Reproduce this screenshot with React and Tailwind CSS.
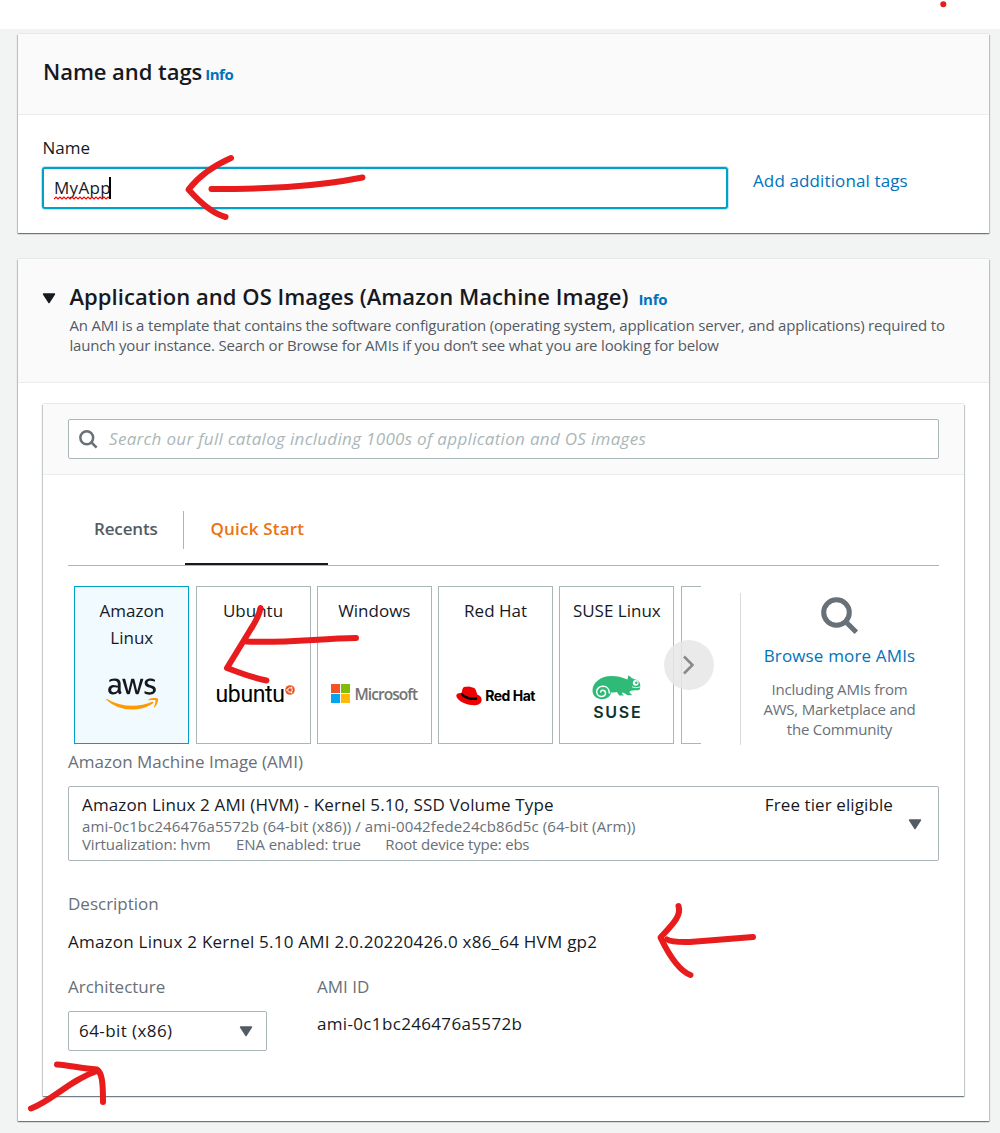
import React from 'react';
import { FaAws } from 'react-icons/fa';

const PANEL =
  'bg-white shadow-[0_1px_1px_0_rgba(0,28,36,0.35),1px_1px_1px_0_rgba(0,28,36,0.18),-1px_1px_1px_0_rgba(0,28,36,0.18),0_-1px_0_0_#e6e9e9]';

function Caret({ className }) {
  return (
    <svg width="14" height="11" viewBox="0 0 14 11" className={className}>
      <path d="M1.5 1h11L7 9.6z" fill="currentColor" stroke="currentColor" strokeWidth="1.4" strokeLinejoin="round" />
    </svg>
  );
}

function SearchIcon({ size, className }) {
  return (
    <svg width={size} height={size} viewBox="0 0 38 38" className={className} fill="none" stroke="currentColor" strokeWidth="5">
      <circle cx="15.5" cy="15.5" r="12.8" />
      <path d="M24.5 24.5 35.3 35.3" />
    </svg>
  );
}

function Tile({ label, selected, children }) {
  return (
    <div
      className={
        'flex h-[158px] w-[115px] shrink-0 flex-col items-center border pt-[10px] text-center text-[17px] leading-[27px] ' +
        (selected ? 'border-[#00a1c9] bg-[#f1faff]' : 'border-[#aab7b8] bg-white')
      }
    >
      <div className="flex h-[54px] w-[78px] justify-center whitespace-nowrap">{label}</div>
      <div className="flex h-[84px] w-full items-center justify-center">{children}</div>
    </div>
  );
}

function AwsLogo() {
  return (
    <>
      <svg width="0" height="0" className="absolute">
        <linearGradient id="awsFill" gradientUnits="userSpaceOnUse" x1="0" y1="0" x2="0" y2="512">
          <stop offset="0.58" stopColor="#16191f" />
          <stop offset="0.58" stopColor="#ff9900" />
        </linearGradient>
      </svg>
      <FaAws className="mt-px h-[42px] w-[52px]" style={{ fill: 'url(#awsFill)' }} />
    </>
  );
}

function UbuntuLogo() {
  return (
    <div className="ml-[4px] mt-[3px] flex items-start font-[Roboto,sans-serif] text-[23px] leading-[28px] text-black">
      <span className="tracking-[-0.35px]">ubuntu</span>
      <svg width="10" height="10" viewBox="0 0 10 10" className="mt-[4px]">
        <circle cx="5" cy="5" r="4.8" fill="#e95420" />
        <circle cx="5" cy="5" r="2.3" fill="none" stroke="#fff" strokeWidth="1" />
        <circle cx="2" cy="5" r="0.8" fill="#fff" />
        <circle cx="6.6" cy="2.3" r="0.8" fill="#fff" />
        <circle cx="6.6" cy="7.7" r="0.8" fill="#fff" />
      </svg>
    </div>
  );
}

function MicrosoftLogo() {
  return (
    <div className="flex items-center gap-[4px]">
      <div className="grid grid-cols-2 gap-px">
        <div className="size-[9px] bg-[#f35325]" />
        <div className="size-[9px] bg-[#81bc06]" />
        <div className="size-[9px] bg-[#05a6f0]" />
        <div className="size-[9px] bg-[#ffba08]" />
      </div>
      <span className="mt-px text-[15.5px] font-semibold leading-5 tracking-[-0.95px] text-[#737373]">Microsoft</span>
    </div>
  );
}

function RedHatLogo() {
  return (
    <div className="mt-[5px] flex items-center gap-[3px]">
      <svg width="26" height="20" viewBox="0 0 26 20">
        <path
          d="M6.4 3.4C7 1.600 7.800.6 9.400.8c1.200.2 2.200-.5 3.600-.4 1.500.2 2.200.9 3.500 1.100 1.700.3 2.700 1.100 3.200 2.600l1.600 4.400c2.700.9 4.700 3.200 4.300 5.900-.5 3.800-5.200 5.200-9.800 4.700C8.700 18.500.8 14.500.3 9.800.1 7.900 2 6.900 4.400 6.900c.4 0 .9 0 1.100.1z"
          fill="#e00"
        />
        <path d="M5.600 6.800c3 3.200 9.200 5.600 15.300 4.400l.3 2.300c-5.700 1.900-13.200-1-16.300-4.500z" fill="#000" />
      </svg>
      <span className="font-[Inter,sans-serif] text-[14px] font-bold leading-5 tracking-[-0.5px] text-black">Red Hat</span>
    </div>
  );
}

function SuseLogo() {
  return (
    <div className="mt-[11px] flex flex-col items-center">
      <svg width="49" height="25" viewBox="0 0 49 25">
        <path
          d="M10 24.200C4.500 24.200.5 20.700.5 15.500.5 8.500 7.500 1 19.500 1c6 0 10 1 16 3.600L36.200.4c2 .4 2.500 2 4.600 3.200 2.200 1.200 4.800 1 6.600 3.600 1 1.500 1.200 5 .4 7-.7 1.300-4 1-7.300 1.200-2.200.2-3 .8-3 1.800 0 1.100 1.800 1.500 2.600 3.100h-4.600c-1.300-1.200-2.800-2.200-5-2.900-1 .5-.2 1.500 1.400 3h-4.700l-2.300-3.300c-2 .5-4.300.3-6 .1 0 4-4 7-8.900 7z"
          fill="#30ba78"
        />
        <path
          d="M17.300 18c0-4-2.600-6.700-6.300-6.700-3.800 0-6.300 2.500-6.300 5.400 0 2.800 2.300 4.700 4.800 4.700 2.300 0 4-1.500 4-3.400 0-1.700-1.200-2.800-2.800-2.800-1.200 0-2 .8-2 1.800"
          fill="none"
          stroke="#fff"
          strokeWidth="1.500"
          strokeLinecap="round"
        />
        <circle cx="43.700" cy="7.800" r="2.900" fill="#fff" />
        <circle cx="44.300" cy="7.700" r="1.200" fill="#30ba78" />
        <path d="M40 11.700c2.500 1.200 5 1.200 8 .2" stroke="#fff" strokeWidth="0.900" fill="none" />
      </svg>
      <span className="mt-[2px] pl-[2px] font-[Inter,sans-serif] text-[16px] font-semibold leading-[20px] tracking-[1.700px] text-[#0c322c]">
        SUSE
      </span>
    </div>
  );
}

/* Hand-drawn red marks over the page. */
function Annotations() {
  return (
    <svg
      width="1000"
      height="1133"
      viewBox="0 0 1000 1133"
      className="pointer-events-none absolute left-0 top-0"
      fill="none"
      stroke="#e81c1c"
      strokeWidth="6"
      strokeLinecap="round"
      strokeLinejoin="round"
    >
      <circle cx="943.300" cy="4.300" r="3" fill="#e81c1c" stroke="none" />
      <path d="M231 158C215 165 199 176 188.500 189.500C197 199 212 213.500 225.500 217" />
      <path d="M211.500 189C262 189 312 187.500 362.500 177.500" />
      <path d="M260.500 608C259 617 254 624 249 632L227 668C240 673 253 678 266.500 680.500" />
      <path d="M246.500 641.500C283 643.500 320 638.500 356 638" />
      <path d="M678.500 906C682 916 671 926 660.500 937.500C667 951 677 970 690.500 975" />
      <path d="M667 939.500C672 942.500 680 942 690 942L753 937" />
      <path d="M57 1064.500C70 1065.500 80 1068 97 1069.500C102 1073 103 1082 103 1102" />
      <path d="M31 1108.500C52 1101 70 1080 97 1071" />
    </svg>
  );
}

export default function App() {
  return (
    <div className="relative h-[1133px] w-[1000px] overflow-hidden bg-[#f2f3f3] font-['Open_Sans','Noto_Sans',sans-serif] text-[17px] leading-6 text-[#16191f]">
      <div className="h-[29px] bg-white" />

      <section className={PANEL + ' ml-[18px] mt-[5px] h-[199px] w-[971px]'}>
        <header className="flex h-[81px] items-baseline border-b border-[#eaeded] bg-[#fafafa] pl-[25px] pt-[22px]">
          <h2 className="text-[22px] font-semibold leading-[31px] tracking-[-0.05px]">Name and tags</h2>
          <a className="ml-[3px] text-[15px] font-bold leading-5 tracking-[-0.5px] text-[#0073bb]">Info</a>
        </header>
        <div className="flex pl-6 pt-[21px]">
          <div className="w-[686px]">
            <label className="pl-[0.5px]">Name</label>
            <div className="mt-[7px] flex h-[42px] items-center rounded-[3px] border-2 border-[#00a1c9] bg-white pl-[10px] shadow-[0_0_0_1px_rgba(0,161,201,0.25)]">
              <span className="relative tracking-[0.3px]">
                MyApp
                <svg width="55" height="4" viewBox="0 0 55 4" className="absolute left-0 top-[19.500px]">
                  <path
                    d="M0 3 2 1 4 3 6 1 8 3 10 1 12 3 14 1 16 3 18 1 20 3 22 1 24 3 26 1 28 3 30 1 32 3 34 1 36 3 38 1 40 3 42 1 44 3 46 1 48 3 50 1 52 3 54 1 56 3"
                    fill="none"
                    stroke="#f00"
                    strokeWidth="1.200"
                  />
                </svg>
              </span>
              <span className="-ml-[1.500px] h-[22px] w-[1.500px] bg-black" />
            </div>
          </div>
          <a className="ml-[25px] mt-[33px] tracking-[0.12px] text-[#0073bb]">Add additional tags</a>
        </div>
      </section>

      <section className={PANEL + ' ml-[18px] mt-[26px] h-[862px] w-[971px]'}>
        <header className="flex h-[124px] border-b border-[#eaeded] bg-[#fafafa] pl-6 pt-[22px]">
          <Caret className="mt-[12px] shrink-0 text-[#16191f]" />
          <div className="ml-[13.500px]">
            <div className="flex h-[30px] items-baseline">
              <h2 className="whitespace-nowrap text-[22px] font-semibold leading-[30px] tracking-[0.05px]">
                Application and OS Images (Amazon Machine Image)
              </h2>
              <a className="ml-[10px] text-[15px] font-bold leading-5 tracking-[-0.3px] text-[#0073bb]">Info</a>
            </div>
            <p className="mt-1 whitespace-nowrap text-[15px] leading-5 tracking-[-0.185px] text-[#545b64]">
              An AMI is a template that contains the software configuration (operating system, application server, and
              applications) required to
              <br />
              launch your instance. Search or Browse for AMIs if you don’t see what you are looking for below
            </p>
          </div>
        </header>

        <div className={PANEL + ' ml-[25px] mt-[21px] h-[692px] w-[921px]'}>
          <div className="h-[71px] border-b border-[#eaeded] bg-[#fafafa] px-[25px] pt-[15px]">
            <div className="flex h-10 items-center rounded-[2px] border border-[#aab7b8] bg-white pl-[10px]">
              <SearchIcon size={19} className="text-[#687078]" />
              <span className="ml-[11px] whitespace-nowrap italic tracking-[0.31px] text-[#aab7b8]">
                Search our full catalog including 1000s of application and OS images
              </span>
            </div>
          </div>

          <div className="px-[25px]">
            <div className="flex h-[91px] border-b border-[#aab7b8] font-semibold">
              <div className="w-[115px] pl-[26px] pt-[42px] tracking-[-0.15px] text-[#545b64]">Recents</div>
              <div className="mt-9 h-[38px] w-px bg-[#aab7b8]" />
              <div className="ml-px w-[143px] border-b-2 border-[#16191f] pl-[25.500px] pt-[42px] tracking-[0.2px] text-[#ec7211]">
                Quick Start
              </div>
            </div>

            <div className="mt-5 flex h-[164px] items-start">
              <div className="relative ml-[6px]">
                <div className="flex w-[627px] gap-[6.25px] overflow-hidden pl-[0.3px]">
                  <Tile
                    selected
                    label={
                      <span>
                        Amazon
                        <br />
                        Linux
                      </span>
                    }
                  >
                    <AwsLogo />
                  </Tile>
                  <Tile label="Ubuntu">
                    <UbuntuLogo />
                  </Tile>
                  <Tile label="Windows">
                    <MicrosoftLogo />
                  </Tile>
                  <Tile label="Red Hat">
                    <RedHatLogo />
                  </Tile>
                  <Tile label="SUSE Linux">
                    <SuseLogo />
                  </Tile>
                  <Tile />
                </div>
                <button className="absolute left-[590px] top-[54px] flex size-[50px] items-center justify-center rounded-full bg-[#e6e6e6]/85">
                  <svg width="14" height="22" viewBox="0 0 14 22" fill="none" stroke="#87898c" strokeWidth="2.500">
                    <path d="M2 2.500 10.500 11 2 19.500" />
                  </svg>
                </button>
              </div>
              <div className="ml-[39px] mt-[7px] flex h-[152px] w-[198px] flex-col items-center border-l border-[#d5dbdb] pt-[4px]">
                <SearchIcon size={38} className="text-[#687078]" />
                <a className="mt-[9px] tracking-[0.16px] text-[#0073bb]">Browse more AMIs</a>
                <p className="mt-[11px] whitespace-nowrap text-center text-[15px] leading-5 tracking-[-0.22px] text-[#687078]">
                  Including AMIs from
                  <br />
                  AWS, Marketplace and
                  <br />
                  the Community
                </p>
              </div>
            </div>

            <div className="text-[#687078]">Amazon Machine Image (AMI)</div>
            <div className="mt-3 flex h-[75px] rounded-[2px] border border-[#aab7b8] pl-[13px] pr-[16px] pt-[6px]">
              <div className="flex-1 whitespace-nowrap">
                <div className="tracking-[0.14px]">Amazon Linux 2 AMI (HVM) - Kernel 5.10, SSD Volume Type</div>
                <div className="text-[15px] leading-[18px] tracking-[0.1px] text-[#687078]">
                  ami-0c1bc246476a5572b (64-bit (x86)) / ami-0042fede24cb86d5c (64-bit (Arm))
                </div>
                <div className="flex gap-[25.500px] text-[15px] leading-[18px] tracking-[-0.100px] text-[#687078]">
                  <span>Virtualization: hvm</span>
                  <span>ENA enabled: true</span>
                  <span className="-ml-px tracking-[-0.190px]">Root device type: ebs</span>
                </div>
              </div>
              <div className="tracking-[0.1px]">Free tier eligible</div>
              <Caret className="ml-[15px] mt-[26px] text-[#545b64]" />
            </div>

            <div className="mt-[31px] text-[#687078]">Description</div>
            <div className="mt-[14px] tracking-[0.23px]">Amazon Linux 2 Kernel 5.10 AMI 2.0.20220426.0 x86_64 HVM gp2</div>
            <div className="mt-[21px] flex">
              <div className="w-[249px]">
                <div className="text-[#687078]">Architecture</div>
                <div className="mt-[12px] flex h-10 w-[199px] items-center justify-between rounded-[2px] border border-[#aab7b8] pl-[10px] pr-[13px]">
                  <span className="tracking-[0.42px]">64-bit (x86)</span>
                  <Caret className="text-[#545b64]" />
                </div>
              </div>
              <div>
                <div className="text-[#687078]">AMI ID</div>
                <div className="mt-[13px] tracking-[0.34px]">ami-0c1bc246476a5572b</div>
              </div>
            </div>
          </div>
        </div>
      </section>

      <Annotations />
    </div>
  );
}
